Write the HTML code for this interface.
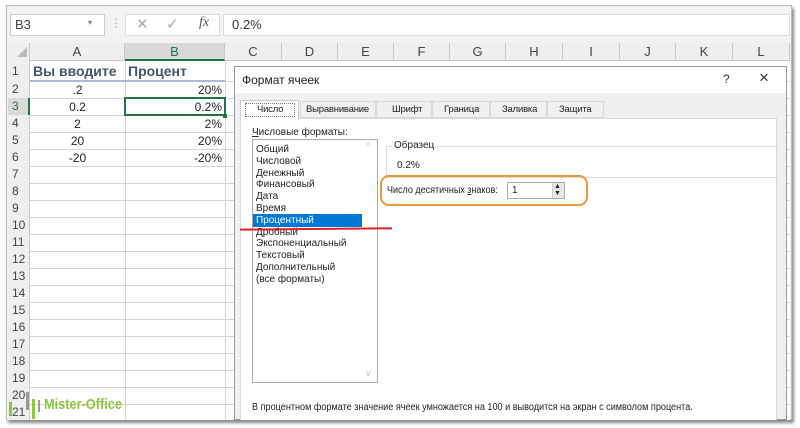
<!DOCTYPE html>
<html><head><meta charset="utf-8"><style>
*{margin:0;padding:0;box-sizing:border-box}
body{width:800px;height:428px;background:#fff;position:relative;overflow:hidden;font-family:"Liberation Sans","DejaVu Sans",sans-serif;}
.a{position:absolute}
.t{position:absolute;white-space:nowrap}
.hl{position:absolute;height:1px;background:#d4d4d4}
.vl{position:absolute;width:1px;background:#d4d4d4}
.ch{position:absolute;top:43px;height:18px;font-size:13px;color:#444;text-align:center;line-height:18px;border-right:1px solid #c8c8c8}
.rn{position:absolute;left:8px;width:22px;font-size:12px;color:#444;padding-left:4px;line-height:17px}
.d{font-size:10px;color:#222;line-height:12px}
.tb{font-size:9.5px;color:#222;line-height:12px;letter-spacing:-0.2px}
</style></head><body>
<div class="a" style="left:6px;top:5px;width:786px;height:415px;background:#f3f3f3;box-shadow:2px 3px 3px #888;border:1px solid #bbb"></div>
<div class="a" style="left:10px;top:14px;width:95px;height:22px;background:#fff;border:1px solid #ccc"></div>
<div class="t" style="left:15px;top:17px;font-size:13px;color:#444">B3</div>
<div class="t" style="left:88px;top:18px;font-size:8px;color:#777">▾</div>
<div class="t" style="left:110px;top:16px;font-size:12px;color:#aaa">⋮</div>
<div class="a" style="left:125px;top:14px;width:95px;height:22px;background:#fff;border:1px solid #ddd"></div>
<div class="t" style="left:136px;top:15px;font-size:15px;color:#aaa">✕</div>
<div class="t" style="left:166px;top:15px;font-size:15px;color:#aaa">✓</div>
<div class="t" style="left:199px;top:15px;font-size:14px;color:#555;font-style:italic;font-family:'Liberation Serif',serif">fx</div>
<div class="a" style="left:223px;top:14px;width:567px;height:22px;background:#fff;border:1px solid #ddd"></div>
<div class="t" style="left:232px;top:17px;font-size:13px;color:#333">0.2%</div>
<div class="a" style="left:8px;top:43px;width:782px;height:377px;background:#fff"></div>
<div class="a" style="left:8px;top:43px;width:782px;height:18px;background:#efefef;border-bottom:1px solid #c8c8c8"></div>
<div class="a" style="left:8px;top:43px;width:22px;height:377px;background:#efefef;border-right:1px solid #c8c8c8"></div>
<div class="t" style="left:17px;top:47px;width:0;height:0;border-left:10px solid transparent;border-bottom:10px solid #bbb"></div>
<div class="ch" style="left:30px;width:95px">A</div>
<div class="ch" style="left:125px;width:100px;background:#d9d9d9;border-bottom:2px solid #217346;color:#217346">B</div>
<div class="ch" style="left:225px;width:57px">C</div>
<div class="ch" style="left:282px;width:56px">D</div>
<div class="ch" style="left:338px;width:56px">E</div>
<div class="ch" style="left:394px;width:56px">F</div>
<div class="ch" style="left:450px;width:56px">G</div>
<div class="ch" style="left:506px;width:57px">H</div>
<div class="ch" style="left:563px;width:57px">I</div>
<div class="ch" style="left:620px;width:56px">J</div>
<div class="ch" style="left:676px;width:57px">K</div>
<div class="ch" style="left:733px;width:57px">L</div>
<div class="vl" style="left:125px;top:61px;height:359px"></div>
<div class="vl" style="left:225px;top:61px;height:359px"></div>
<div class="hl" style="left:30px;top:81px;width:760px"></div>
<div class="hl" style="left:30px;top:98px;width:760px"></div>
<div class="hl" style="left:30px;top:115px;width:760px"></div>
<div class="hl" style="left:30px;top:132px;width:760px"></div>
<div class="hl" style="left:30px;top:149px;width:760px"></div>
<div class="hl" style="left:30px;top:166px;width:760px"></div>
<div class="hl" style="left:30px;top:183px;width:760px"></div>
<div class="hl" style="left:30px;top:200px;width:760px"></div>
<div class="hl" style="left:30px;top:217px;width:760px"></div>
<div class="hl" style="left:30px;top:234px;width:760px"></div>
<div class="hl" style="left:30px;top:251px;width:760px"></div>
<div class="hl" style="left:30px;top:268px;width:760px"></div>
<div class="hl" style="left:30px;top:285px;width:760px"></div>
<div class="hl" style="left:30px;top:302px;width:760px"></div>
<div class="hl" style="left:30px;top:319px;width:760px"></div>
<div class="hl" style="left:30px;top:336px;width:760px"></div>
<div class="hl" style="left:30px;top:353px;width:760px"></div>
<div class="hl" style="left:30px;top:370px;width:760px"></div>
<div class="hl" style="left:30px;top:387px;width:760px"></div>
<div class="hl" style="left:30px;top:404px;width:760px"></div>
<div class="a" style="left:30px;top:80px;width:195px;height:2px;background:#a9b8d8"></div>
<div class="rn" style="top:63px">1</div><div class="rn" style="top:81px">2</div>
<div class="rn" style="top:98px;background:#d9d9d9;color:#217346;border-right:2px solid #217346">3</div>
<div class="rn" style="top:115px">4</div><div class="rn" style="top:132px">5</div>
<div class="rn" style="top:149px">6</div><div class="rn" style="top:166px">7</div>
<div class="rn" style="top:183px">8</div><div class="rn" style="top:200px">9</div>
<div class="rn" style="top:217px">10</div><div class="rn" style="top:234px">11</div>
<div class="rn" style="top:251px">12</div><div class="rn" style="top:268px">13</div>
<div class="rn" style="top:285px">14</div><div class="rn" style="top:302px">15</div>
<div class="rn" style="top:319px">16</div><div class="rn" style="top:336px">17</div>
<div class="rn" style="top:353px">18</div><div class="rn" style="top:370px">19</div>
<div class="rn" style="top:387px">20</div><div class="rn" style="top:404px">21</div>
<div class="t" style="left:33px;top:63px;font-size:14px;font-weight:bold;color:#44546a">Вы вводите</div>
<div class="t" style="left:128px;top:63px;font-size:14px;font-weight:bold;color:#44546a">Процент</div>
<div class="t" style="left:30px;width:95px;text-align:center;top:83px;font-size:12px;color:#222">.2</div>
<div class="t" style="left:30px;width:95px;text-align:center;top:100px;font-size:12px;color:#222">0.2</div>
<div class="t" style="left:30px;width:95px;text-align:center;top:117px;font-size:12px;color:#222">2</div>
<div class="t" style="left:30px;width:95px;text-align:center;top:134px;font-size:12px;color:#222">20</div>
<div class="t" style="left:30px;width:95px;text-align:center;top:151px;font-size:12px;color:#222">-20</div>
<div class="t" style="left:125px;width:97px;text-align:right;top:83px;font-size:12px;color:#222">20%</div>
<div class="a" style="left:124px;top:97px;width:102px;height:19px;border:2px solid #217346"></div>
<div class="a" style="left:223px;top:114px;width:4px;height:4px;background:#217346"></div>
<div class="t" style="left:125px;width:97px;text-align:right;top:100px;font-size:12px;color:#222">0.2%</div>
<div class="t" style="left:125px;width:97px;text-align:right;top:117px;font-size:12px;color:#222">2%</div>
<div class="t" style="left:125px;width:97px;text-align:right;top:134px;font-size:12px;color:#222">20%</div>
<div class="t" style="left:125px;width:97px;text-align:right;top:151px;font-size:12px;color:#222">-20%</div>
<div class="a" style="left:9px;top:402px;width:3px;height:14px;background:#8cc63f"></div>
<div class="a" style="left:26px;top:392px;width:3px;height:18px;background:#999"></div>
<div class="a" style="left:32px;top:399px;width:3px;height:20px;background:#8cc63f"></div>
<div class="a" style="left:38px;top:400px;width:2px;height:12px;background:#999"></div>
<div class="t" style="left:44px;top:396px;font-size:15px;font-weight:bold;color:#8cc63f;transform:scaleX(0.85);transform-origin:left">Mister-Office</div>
<div class="a" style="left:234px;top:66px;width:553px;height:354px;background:#f0f0f0;border:1px solid #999"></div>
<div class="a" style="left:235px;top:67px;width:551px;height:26px;background:#fff"></div>
<div class="t" style="left:242px;top:73px;font-size:12px;color:#222">Формат ячеек</div>
<div class="t" style="left:723px;top:72px;font-size:12px;color:#333">?</div>
<div class="t" style="left:759px;top:68px;font-size:17px;color:#333">×</div>
<div class="a" style="left:300px;top:101px;width:76px;height:17px;background:#f0f0f0;border:1px solid #d9d9d9"></div>
<div class="t tb" style="left:306px;top:104px">Выравнивание</div>
<div class="a" style="left:376px;top:101px;width:56px;height:17px;border:1px solid #d9d9d9"></div>
<div class="t tb" style="left:392px;top:104px">Шрифт</div>
<div class="a" style="left:432px;top:101px;width:58px;height:17px;border:1px solid #d9d9d9"></div>
<div class="t tb" style="left:444px;top:104px">Граница</div>
<div class="a" style="left:490px;top:101px;width:57px;height:17px;border:1px solid #d9d9d9"></div>
<div class="t tb" style="left:502px;top:104px">Заливка</div>
<div class="a" style="left:547px;top:101px;width:57px;height:17px;border:1px solid #d9d9d9"></div>
<div class="t tb" style="left:559px;top:104px">Защита</div>
<div class="a" style="left:240px;top:118px;width:537px;height:302px;background:#fff;border:1px solid #d9d9d9;border-bottom:none"></div>
<div class="a" style="left:240px;top:100px;width:59px;height:20px;background:#fff;border:1px solid #ccc;border-bottom:none"></div>
<div class="a" style="left:245px;top:103px;width:50px;height:14px;border:1px dotted #777"></div>
<div class="t tb" style="left:257px;top:104px">Число</div>
<div class="t d" style="left:252px;top:127px"><u>Ч</u>исловые форматы:</div>
<div class="a" style="left:252px;top:139px;width:126px;height:244px;border:1px solid #aaa;background:#fff"></div>
<div class="t" style="left:366px;top:141px;font-size:9px;color:#bbb">^</div>
<div class="t" style="left:366px;top:368px;font-size:9px;color:#bbb">v</div>
<div class="a" style="left:253px;top:214px;width:109px;height:13px;background:#0078d7"></div>
<div class="t d" style="left:256px;top:144px;line-height:11.8px">Общий<br>Числовой<br>Денежный<br>Финансовый<br>Дата<br>Время<br><span style="color:#fff">Процентный</span><br>Дробный<br>Экспоненциальный<br>Текстовый<br>Дополнительный<br>(все форматы)</div>
<div class="a" style="left:240px;top:228px;width:152px;height:2px;background:#d8232a;transform:rotate(-0.5deg)"></div>
<div class="a" style="left:386px;top:146px;width:392px;height:32px;border:1px solid #ddd;border-right:none"></div>
<div class="t d" style="left:392px;top:140px;background:#fff;padding:0 2px">Образец</div>
<div class="t d" style="left:397px;top:160px">0.2%</div>
<div class="a" style="left:380px;top:175px;width:208px;height:31px;border:2px solid #e69a3c;border-radius:9px"></div>
<div class="t d" style="left:387px;top:185px;transform:scaleX(0.9);transform-origin:left">Число десятичных <u>з</u>наков:</div>
<div class="a" style="left:507px;top:182px;width:58px;height:17px;border:1px solid #aaa;background:#fff"></div>
<div class="t d" style="left:512px;top:185px">1</div>
<div class="a" style="left:552px;top:183px;width:12px;height:15px;background:#e8e8e8;border-left:1px solid #ccc"></div>
<div class="t" style="left:554px;top:183px;font-size:7px;line-height:7px;color:#222">▲<br>▼</div>
<div class="t d" style="left:252px;top:402px;transform:scaleX(0.91);transform-origin:left">В процентном формате значение ячеек умножается на 100 и выводится на экран с символом процента.</div>
</body></html>
